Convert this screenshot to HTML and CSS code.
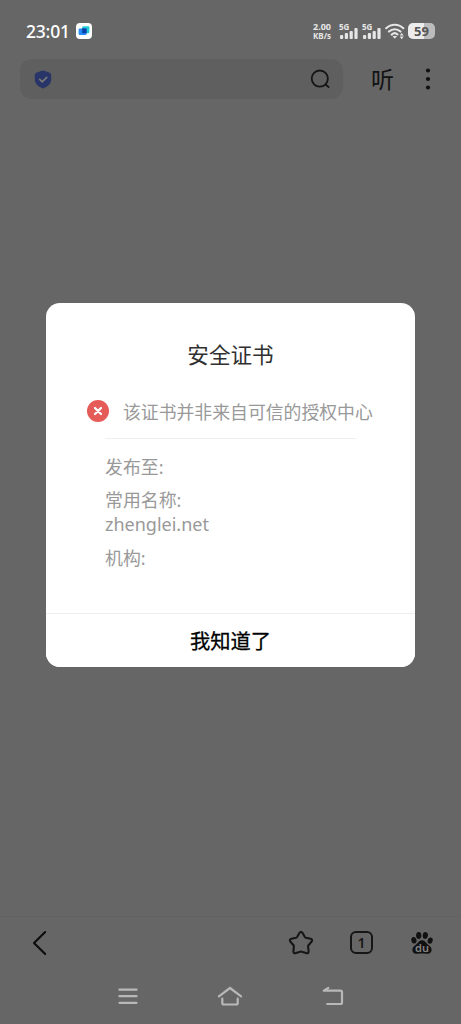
FILE: index.html
```
<!DOCTYPE html>
<html lang="zh-CN">
<head>
<meta charset="utf-8">
<title>安全证书</title>
<link rel="stylesheet" href="styles.css">
</head>
<body>
<div class="screen">
  <header class="status">
    <span class="clock">23:01</span>
    <svg class="app-icon" width="16" height="16" viewBox="0 0 16 16"><rect width="16" height="16" rx="4" fill="#fff"/><rect x="6.2" y="3.2" width="7.2" height="7" rx="1.2" fill="#20cfd6"/><rect x="2.6" y="5.4" width="8" height="6.600" rx="1.2" fill="#268cf5"/><rect x="6.2" y="5.4" width="4.400" height="4.800" fill="#0a3fa8"/></svg>
    <div class="speed"><span>2.00</span><span>KB/s</span></div>
    <div class="signal"><span>5G</span><svg width="18" height="12" viewBox="0 0 18 12" fill="#e6e6e6"><rect x="0" y="8" width="3.2" height="4" rx="1"/><rect x="4.8" y="6" width="3.2" height="6" rx="1"/><rect x="9.6" y="4" width="3.2" height="8" rx="1"/><rect x="14.4" y="1" width="3.2" height="11" rx="1"/></svg></div>
    <div class="signal second"><span>5G</span><svg width="18" height="12" viewBox="0 0 18 12" fill="#e6e6e6"><rect x="0" y="8" width="3.2" height="4" rx="1"/><rect x="4.8" y="6" width="3.2" height="6" rx="1"/><rect x="9.6" y="4" width="3.2" height="8" rx="1"/><rect x="14.4" y="1" width="3.2" height="11" rx="1"/></svg></div>
    <svg class="wifi" width="20" height="17" viewBox="0 0 20 17" fill="none" stroke="#e6e6e6" stroke-width="2.100" stroke-linecap="round"><path d="M1.2 5.2C6 .5 13.500 .5 18.300 5.200M4 8.600C7.300 5.400 12.200 5.400 15.500 8.600M6.700 11.600C8.500 10 11 10 12.500 11.400"/><path d="M7.500 13h4.600l-2.300 2.700z" fill="#e6e6e6" stroke="none"/><path d="M14.700 12.600l2-2.600 2 2.600zM14.700 13.600l2 2.600 2-2.600z" fill="#e6e6e6" stroke="none"/></svg>
    <div class="battery"><b>59</b></div>
  </header>

  <div class="toolbar">
    <div class="search">
      <svg width="18" height="19" viewBox="0 0 18 19"><path d="M7.800 .7Q9 .2 10.200 .7L15.700 2.800Q17.200 3.500 17.200 5V9.600C17.200 14.200 13.500 16.500 10.200 18.100Q9 18.700 7.800 18.100C4.500 16.500 .8 14.200 .8 9.600V5Q.8 3.500 2.300 2.800Z" fill="#293568"/><path d="M5.700 9.300l2.600 2.500 4.400-4.500" fill="none" stroke="#777" stroke-width="1.700" stroke-linecap="round"/></svg>
      <svg width="20" height="20" viewBox="0 0 20 20" fill="none" stroke="#151515" stroke-width="1.800" stroke-linecap="round"><circle cx="9.800" cy="9.600" r="8.100"/><path d="M15.700 15.500l2.900 2.700"/></svg>
    </div>
    <span class="listen">听</span>
    <svg class="more" width="6" height="22" viewBox="0 0 6 22" fill="#111"><circle cx="3" cy="2.500" r="2.100"/><circle cx="3" cy="11" r="2.100"/><circle cx="3" cy="19.500" r="2.100"/></svg>
  </div>

  <main class="page"></main>

  <nav class="browser-bar">
    <svg class="back" width="16" height="26" viewBox="0 0 16 26" fill="none" stroke="#0c0c0c" stroke-width="2.100" stroke-linecap="round" stroke-linejoin="round"><path d="M13.200 2L2 13l11.200 11"/></svg>
    <svg class="star" width="26" height="26" viewBox="0 0 26 26" fill="none" stroke="#161616" stroke-width="2.100" stroke-linejoin="round"><path d="M11.400 3Q13 .7 14.600 3L16.900 7Q17.300 7.600 18 7.800L22.500 8.800Q25.200 9.600 23.500 11.800L20.500 15.200Q20 15.800 20.100 16.500L20.600 21.200Q20.600 24 18 23L13.800 21.700Q13 21.400 12.200 21.700L8 23Q5.400 24 5.400 21.200L5.900 16.500Q6 15.800 5.500 15.200L2.500 11.800Q.8 9.600 3.500 8.800L8 7.800Q8.700 7.600 9.100 7Z"/></svg>
    <div class="tabs">1</div>
    <svg class="paw" width="24" height="24" viewBox="0 0 24 24" fill="#111"><ellipse cx="3.900" cy="9.300" rx="2.600" ry="3.300" transform="rotate(-12 3.900 9.300)"/><ellipse cx="8.700" cy="4.500" rx="2.600" ry="3.400"/><ellipse cx="15.300" cy="4.500" rx="2.600" ry="3.400" transform="rotate(8 15.300 4.500)"/><ellipse cx="20.200" cy="9.600" rx="2.500" ry="3.200" transform="rotate(12 20.200 9.600)"/><path d="M12 9.200C14.600 9.200 15.600 11.300 17.300 13.100C19.700 15.200 21.800 16.600 21.600 19.200C21.300 22.200 18.900 22.900 16.700 22.800C13.700 22.400 10.300 22.400 7.300 22.800C5 22.900 2.600 22.200 2.400 19.200C2.200 16.600 4.300 15.200 6.700 13.100C8.400 11.300 9.400 9.200 12 9.200Z"/><text x="12" y="20.900" text-anchor="middle" class="du">du</text></svg>
  </nav>

  <nav class="system-bar">
    <svg width="20" height="18" viewBox="0 0 20 18" stroke="#b8b8b8" stroke-width="2.300" stroke-linecap="round"><path d="M1.500 2.700h17M1.500 9.200h17M1.500 15.800h17"/></svg>
    <svg width="26" height="20" viewBox="0 0 26 20" fill="none" stroke="#b8b8b8" stroke-width="2.200" stroke-linecap="round" stroke-linejoin="round"><path d="M1.900 10.300L13 2l11.100 8.300M5.300 12.500V17q0 1.500 1.500 1.500h12.400q1.500 0 1.500-1.500v-4.500"/></svg>
    <svg width="22" height="20" viewBox="0 0 22 20" fill="none" stroke="#b8b8b8" stroke-width="2.200" stroke-linecap="round" stroke-linejoin="round"><path d="M6.300 1.900L1.800 4.700H18.500q1.500 0 1.500 1.500V16.500q0 1.500-1.500 1.500H5.200"/></svg>
  </nav>

  <div class="overlay">
    <section class="dialog">
      <h1>安全证书</h1>
      <div class="warning">
        <svg width="22" height="22" viewBox="0 0 22 22"><circle cx="11" cy="11" r="11" fill="#e55b58"/><path d="M8 8l6 6M14 8l-6 6" stroke="#fff" stroke-width="2.300" stroke-linecap="round"/></svg>
        <span>该证书并非来自可信的授权中心</span>
      </div>
      <div class="details">
        <p>发布至:</p>
        <p class="name">常用名称:<br><span class="domain">zhenglei.net</span></p>
        <p>机构:</p>
      </div>
      <button class="confirm">我知道了</button>
    </section>
  </div>
</div>
</body>
</html>
```

FILE: styles.css
```
* { box-sizing: border-box; }
body {
  margin: 0;
  font-family: "Noto Sans", "Noto Sans CJK SC", sans-serif;
}
svg { display: block; flex: none; }
.screen {
  position: relative;
  display: flex;
  flex-direction: column;
  height: 1024px;
  background: #666;
  overflow: hidden;
}
.status {
  display: flex;
  align-items: center;
  height: 59px;
  padding: 3px 26px 0 26px;
  color: #fff;
}
.clock {
  width: 50px;
  font-size: 17.500px;
  font-weight: 500;
  letter-spacing: -0.200px;
  line-height: 20px;
}
.speed {
  display: flex;
  flex-direction: column;
  width: 22px;
  margin-left: auto;
  font-size: 9px;
  font-weight: 700;
  line-height: 9px;
  text-align: center;
  color: #e6e6e6;
}
.speed span + span { font-size: 8px; }
.signal {
  display: flex;
  flex-direction: column;
  width: 19px;
  margin-left: 6px;
  color: #e6e6e6;
  font-size: 8px;
  font-weight: 700;
  line-height: 7px;
}
.signal svg { margin-top: -3px; margin-left: 1px; }
.signal.second { margin-left: 4px; }
.wifi { margin-left: 4px; }
.battery {
  width: 27px;
  height: 16px;
  margin-left: 3px;
  border-radius: 5px;
  background: linear-gradient(90deg, #ececec 59%, #bcbcbc 59%);
  color: #555;
  font-size: 13px;
  line-height: 16px;
  text-align: center;
}
.toolbar {
  display: flex;
  align-items: center;
  height: 40px;
  padding-left: 20px;
}
.search {
  display: flex;
  align-items: center;
  justify-content: space-between;
  width: 323px;
  height: 40px;
  padding: 0 13px 0 14px;
  border-radius: 12px;
  background: #5f5f5f;
}
.listen {
  width: 24px;
  margin-left: 28px;
  padding-bottom: 2px;
  color: #121212;
  font-family: "Noto Sans CJK SC", sans-serif;
  font-size: 23px;
  line-height: 30px;
}
.more { margin-left: 30px; }
.page { flex: 1; }
.browser-bar {
  display: flex;
  align-items: center;
  height: 53px;
  padding-left: 32px;
  padding-bottom: 1px;
  border-top: 1px solid #626262;
}
.star { margin-left: 240px; }
.tabs {
  width: 23px;
  height: 23px;
  margin-left: 36px;
  border: 2px solid #161616;
  border-radius: 6px;
  color: #161616;
  font-size: 14px;
  font-weight: 600;
  line-height: 19px;
  text-align: center;
}
.paw { margin-left: 37px; }
.du {
  fill: #858585;
  font-size: 11px;
  font-weight: 600;
}
.system-bar {
  display: flex;
  align-items: center;
  height: 55px;
  padding-left: 118px;
  padding-bottom: 1px;
  gap: 79px;
}
.overlay {
  position: absolute;
  inset: 0;
  display: flex;
  justify-content: center;
  align-items: flex-start;
  padding-top: 303px;
}
.dialog {
  display: flex;
  flex-direction: column;
  width: 369px;
  height: 364px;
  border-radius: 14px;
  background: #fff;
  overflow: hidden;
}
h1 {
  margin: 37px 0 0;
  color: #303030;
  font-size: 21.600px;
  font-weight: 400;
  line-height: 30px;
  text-align: center;
}
.warning {
  display: flex;
  align-items: center;
  height: 24px;
  margin: 29px 0 0 41px;
  gap: 14px;
  color: #999;
  font-size: 17.850px;
  line-height: 24px;
  white-space: nowrap;
}
.warning span { padding-top: 2px; }
.details {
  flex: 1;
  margin: 15px 59px 0;
  padding-top: 16px;
  border-top: 1px solid #eee;
  color: #999;
  font-size: 17.900px;
  line-height: 24.500px;
}
.details p { margin: 0 0 8.500px; }
.details .name { line-height: 24px; margin-bottom: 9.500px; }
.domain { font-size: 18px; }
.confirm {
  height: 54px;
  padding: 1px 0 0;
  border: 0;
  border-top: 1px solid #eee;
  background: #fff;
  color: #000;
  font-family: "Noto Sans", "Noto Sans CJK SC", sans-serif;
  font-size: 20.300px;
  font-weight: 400;
  -webkit-text-stroke: 0.300px #000;
  line-height: 52px;
}
```
